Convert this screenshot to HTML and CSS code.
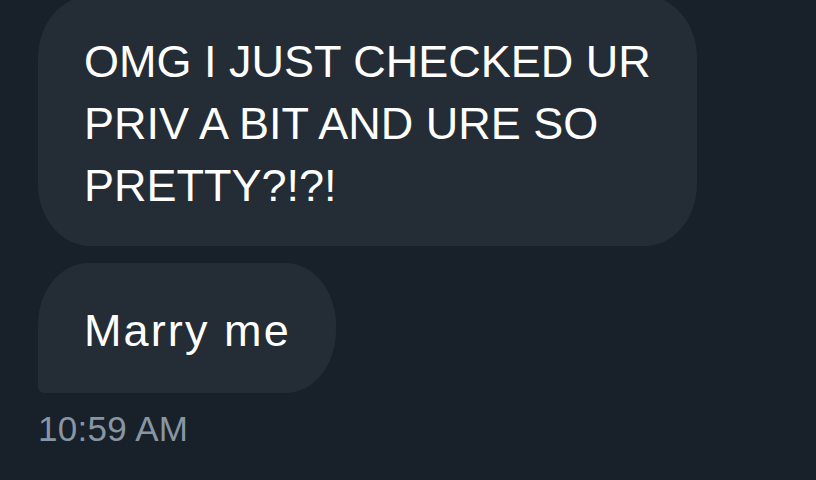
FILE: index.html
```html
<!DOCTYPE html>
<html lang="en">
<head>
<meta charset="utf-8">
<title>Messages</title>
<link rel="stylesheet" href="styles.css">
</head>
<body>
<main class="chat">
  <div class="bubble bubble--first">OMG I JUST CHECKED UR PRIV A BIT AND URE SO PRETTY?!?!</div>
  <div class="bubble bubble--last"><span class="bubble__text--wide">Marry me</span></div>
  <time class="timestamp">10:59 AM</time>
</main>
</body>
</html>
```
FILE: styles.css
```css
html, body {
  margin: 0;
  padding: 0;
  background: #18202a;
  height: 100%;
  overflow: hidden;
}

.chat {
  display: flex;
  flex-direction: column;
  align-items: flex-start;
  padding-left: 38px;
  margin-top: -4px;
  font-family: "Liberation Sans", Arial, sans-serif;
}

.bubble {
  box-sizing: border-box;
  background: #242c36;
  color: #ffffff;
  font-size: 45px;
  line-height: 62px;
  padding: 35px 40px 29px 46px;
  border-radius: 52px / 62px;
}

.bubble--first {
  width: 659px;
}

.bubble--last {
  margin-top: 17px;
  padding: 37px 45px 31px 46px;
  border-radius: 50px / 62px;
  border-bottom-left-radius: 6px;
}

.bubble__text--wide {
  letter-spacing: 2.1px;
}

.timestamp {
  margin-top: 16px;
  font-size: 35px;
  line-height: 40px;
  letter-spacing: 0.3px;
  color: #8896a4;
}
```
